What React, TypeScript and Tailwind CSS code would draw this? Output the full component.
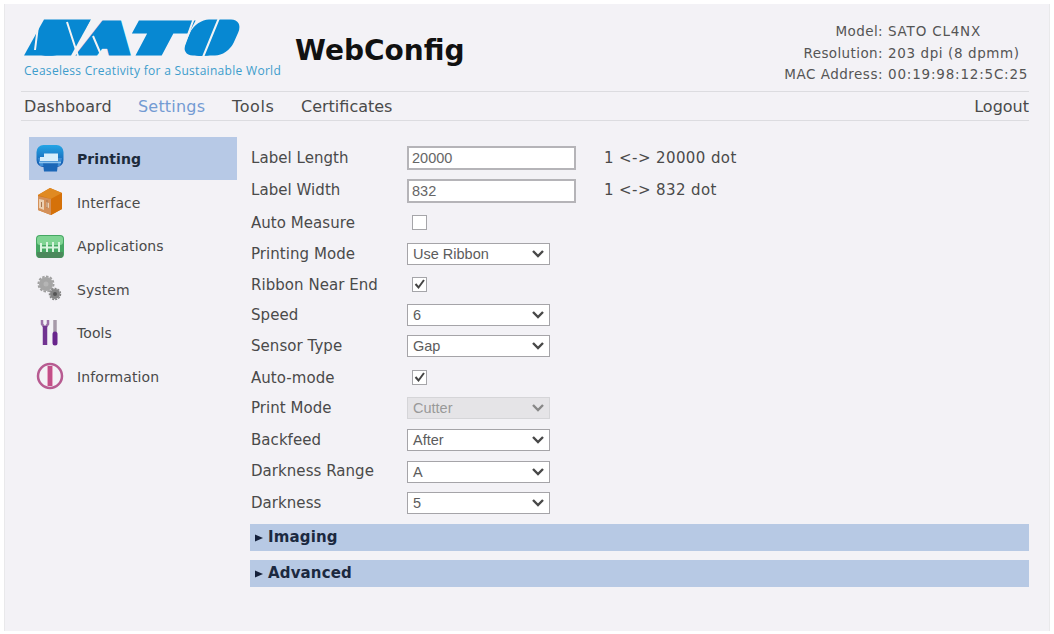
import type { ReactNode } from "react";
import clsx from "clsx";

type Row = {
  label: string;
  height: string;
  kind: "input" | "checkbox" | "select";
  value?: string;
  checked?: boolean;
  disabled?: boolean;
  hint?: string;
};

const rows: Row[] = [
  { label: "Label Length", height: "h-[32px]", kind: "input", value: "20000", hint: "1 <-> 20000 dot" },
  { label: "Label Width", height: "h-[33px]", kind: "input", value: "832", hint: "1 <-> 832 dot" },
  { label: "Auto Measure", height: "h-[33px]", kind: "checkbox" },
  { label: "Printing Mode", height: "h-[28px]", kind: "select", value: "Use Ribbon" },
  { label: "Ribbon Near End", height: "h-[34px]", kind: "checkbox", checked: true },
  { label: "Speed", height: "h-[26px]", kind: "select", value: "6" },
  { label: "Sensor Type", height: "h-[36px]", kind: "select", value: "Gap" },
  { label: "Auto-mode", height: "h-[28px]", kind: "checkbox", checked: true },
  { label: "Print Mode", height: "h-[32px]", kind: "select", value: "Cutter", disabled: true },
  { label: "Backfeed", height: "h-[32px]", kind: "select", value: "After" },
  { label: "Darkness Range", height: "h-[31px]", kind: "select", value: "A" },
  { label: "Darkness", height: "h-[32px]", kind: "select", value: "5" },
];

function Logo() {
  return (
    <svg
      width="220"
      height="40"
      viewBox="22 17 220 40"
      className="block overflow-visible"
      fontFamily="Liberation Sans"
      fontWeight="bold"
      fontSize="38"
      fill="#0788d2"
      stroke="#0788d2"
      strokeWidth="9"
      strokeLinejoin="miter"
      strokeMiterlimit="3"
    >
      {/* slanted bars behind the first and last letter */}
      <rect width="47" height="36" transform="translate(44 19.500) skewX(-29)" stroke="none" />
      <rect width="48" height="36" rx="13" transform="translate(196 19.500) skewX(-24)" stroke="none" />
      <text transform="translate(37 50.500) skewX(-29)" textLength="28" lengthAdjust="spacingAndGlyphs">S</text>
      <text transform="translate(84 50.500) skewX(-14)" textLength="40" lengthAdjust="spacingAndGlyphs">A</text>
      <text transform="translate(130 50.500) skewX(-28)" textLength="42" lengthAdjust="spacingAndGlyphs">T</text>
      <text transform="translate(186 50.500) skewX(-24)" textLength="36" lengthAdjust="spacingAndGlyphs">O</text>
      {/* slashes that cut through the letters */}
      <path
        d="M38 26L35 50M67 22L78 56M93 36L102 57M93 18L73 58M219 18L203 57M194 18L180 57"
        stroke="#f3f3f4"
        strokeWidth="2"
      />
    </svg>
  );
}

function PrinterIcon() {
  return (
    <svg width="30" height="30" viewBox="0 0 30 30">
      <defs>
        <linearGradient id="printer" x1="0" y1="0" x2="0" y2="1">
          <stop offset="0" stopColor="#25a5e5" />
          <stop offset="1" stopColor="#1456ad" />
        </linearGradient>
      </defs>
      <rect x="1.500" y="1" width="27" height="22" rx="7" fill="url(#printer)" />
      <path d="M3 14h24l-2 8H5z" fill="#3f8dd4" />
      <path d="M9 9.500h14v7.500H5v-4h4z" fill="#d7eefb" />
      <path d="M8 19h15l-1 8.500H9z" fill="#1b67b7" />
      <path d="M4 18.500h22" stroke="#8fc4ee" strokeWidth="1.500" />
    </svg>
  );
}

function BoxIcon() {
  return (
    <svg width="30" height="30" viewBox="0 0 30 30">
      <path d="M15 1l12 5v16l-11 6L3 23V8z" fill="#d57715" />
      <path d="M15 1l12 5-11 6L3 8z" fill="#e08a22" />
      <path d="M3 9l13 3v16L3 23z" fill="#d49059" />
      <path d="M16 12l11-6v16l-11 6z" fill="#d57109" />
      <path d="M4 12l5 1v10l-5-2zM11 15l3 1v5l-3-1z" fill="#ecd0b2" />
      <path d="M6.500 15v5M12 13v8" stroke="#a87650" />
    </svg>
  );
}

function AppsIcon() {
  return (
    <svg width="30" height="30" viewBox="0 0 30 30">
      <rect x="1" y="4" width="28" height="23" rx="4" fill="#45a763" />
      <rect x="2" y="5" width="26" height="9" rx="3" fill="#7fd493" />
      <path d="M2 21h26v3a3 3 0 0 1-3 3H5a3 3 0 0 1-3-3z" fill="#4b895c" />
      <path d="M6 12v9M12 11v10M18 11v10M24 11v10" stroke="#d8f4df" strokeWidth="2" />
      <path d="M5 16.500h20" stroke="#d8f4df" strokeWidth="2" />
    </svg>
  );
}

function GearsIcon() {
  return (
    <svg width="30" height="30" viewBox="0 0 30 30" fill="none">
      <circle cx="11" cy="10" r="7.500" stroke="#a0a0a0" strokeWidth="2" strokeDasharray="2.500 1.400" />
      <circle cx="11" cy="10" r="7" fill="#a5a5a5" />
      <circle cx="11" cy="10" r="2.500" fill="#b5b5b5" />
      <circle cx="20" cy="20" r="5.500" stroke="#858585" strokeWidth="1.500" strokeDasharray="2 1.100" />
      <circle cx="20" cy="20" r="5" fill="#858585" />
      <circle cx="20" cy="20" r="2" fill="#555" />
    </svg>
  );
}

function ToolsIcon() {
  return (
    <svg width="30" height="30" viewBox="0 0 30 30" fill="none">
      <path d="M7 2v4l3 4 3-4V2" stroke="#9c72a8" strokeWidth="2.500" />
      <path d="M10 8v19" stroke="#713491" strokeWidth="4.500" />
      <path d="M20 2v12" stroke="#a69aa9" strokeWidth="3.500" />
      <path d="M20 16v9" stroke="#68258c" strokeWidth="5" strokeLinecap="round" />
    </svg>
  );
}

function InfoIcon() {
  return (
    <svg width="30" height="30" viewBox="0 0 30 30" fill="none">
      <circle cx="15" cy="15" r="12" stroke="#b75b91" strokeWidth="2.500" />
      <path d="M15 5v20" stroke="#c24f88" strokeWidth="4" />
      <path d="M12.500 5v20M17.500 5v20" stroke="#e7a5c3" />
    </svg>
  );
}

const menu: { label: string; icon: ReactNode }[] = [
  { label: "Printing", icon: <PrinterIcon /> },
  { label: "Interface", icon: <BoxIcon /> },
  { label: "Applications", icon: <AppsIcon /> },
  { label: "System", icon: <GearsIcon /> },
  { label: "Tools", icon: <ToolsIcon /> },
  { label: "Information", icon: <InfoIcon /> },
];

function Control({ row }: { row: Row }) {
  if (row.kind === "checkbox") {
    return (
      <span className="mb-[2px] ml-[5px] flex size-[15px] items-center justify-center border border-[#a5a5a9] bg-white">
        {row.checked && (
          <svg width="13" height="13" viewBox="0 0 13 13" fill="none" stroke="#444" strokeWidth="2">
            <path d="M2.500 6l3 3.500L11 2" />
          </svg>
        )}
      </span>
    );
  }
  if (row.kind === "input") {
    return (
      <span className="flex h-[24px] w-[169px] items-center border-2 border-[#b5b4b8] bg-white pt-[2px] pl-[3px] font-['Liberation_Sans',sans-serif] text-[14.5px] text-[#666]">
        {row.value}
      </span>
    );
  }
  return (
    <span
      className={clsx(
        "flex h-[22px] w-[143px] items-center justify-between border pr-[4px] pl-[5px] font-['Liberation_Sans',sans-serif] text-[14.5px]",
        row.disabled ? "border-[#d5d5d8] bg-[#e5e4e7] text-[#999]" : "border-[#a5a4a8] bg-white text-[#5c5c5c]"
      )}
    >
      <span className="pt-[2px]">{row.value}</span>
      <svg width="14" height="10" viewBox="0 0 14 10" fill="none" stroke={row.disabled ? "#888" : "#484848"} strokeWidth="2.4">
        <path d="M2 2l5 5 5-5" />
      </svg>
    </span>
  );
}

function Section({ title }: { title: string }) {
  return (
    <div className="flex h-[27px] items-center gap-[5px] bg-[#b7c9e4] pl-[5px] text-[15px] font-bold tracking-[0.15px] text-[#1c2940]">
      <svg width="8" height="8" viewBox="0 0 8 8" fill="#14203a">
        <path d="M0 0.500L8 4L0 7.500z" />
      </svg>
      {title}
    </div>
  );
}

export default function App() {
  return (
    <div className="h-[634px] w-[1054px] bg-white pt-[4px] pl-[4px] font-['DejaVu_Sans',sans-serif] text-[#4a4a4a]">
      <div className="h-[627px] w-[1046px] border-x border-[#e9e9eb] bg-[#f3f2f6] pr-[20px] pl-[16px]">
        {/* Header */}
        <header className="flex h-[88px] justify-between border-b border-[#dcdce0]">
          <div className="flex">
            <div className="w-[271px] pt-[13px] pl-px">
              <Logo />
              <div className="mt-[5px] pl-[2px] font-['Open_Sans',sans-serif] text-[12px] leading-[18px] tracking-[0.3px] whitespace-nowrap text-[#3d9dcc]">
                Ceaseless Creativity for a Sustainable World
              </div>
            </div>
            <h1 className="pt-[27px] pl-[3px] text-[28px] leading-[40px] font-bold text-[#111]">WebConfig</h1>
          </div>
          <div className="grid w-[245px] grid-cols-[99px_1fr] content-start gap-x-[5px] pt-[17px] text-[13.5px] leading-[21.500px] whitespace-nowrap text-[#555]">
            <span className="text-right tracking-[0.4px]">Model:</span>
            <span className="tracking-[0.8px]">SATO CL4NX</span>
            <span className="text-right tracking-[0.4px]">Resolution:</span>
            <span className="tracking-[0.6px]">203 dpi (8 dpmm)</span>
            <span className="text-right tracking-[0.5px]">MAC Address:</span>
            <span className="tracking-[0.8px]">00:19:98:12:5C:25</span>
          </div>
        </header>

        {/* Top navigation */}
        <nav className="flex h-[29px] items-center border-b border-[#dcdce0] pt-[2px] pl-[3px] text-[16px]">
          <span className="w-[114px] tracking-[0.1px]">Dashboard</span>
          <span className="w-[94px] tracking-[0.2px] text-[#739bd3]">Settings</span>
          <span className="w-[69px] tracking-[0.6px]">Tools</span>
          <span>Certificates</span>
          <span className="ml-auto">Logout</span>
        </nav>

        <div className="flex">
          {/* Sidebar */}
          <aside className="ml-[8px] w-[208px] pt-[16px]">
            {menu.map((item, i) => (
              <div
                key={item.label}
                className={clsx(
                  "mb-[0.500px] flex h-[43px] items-center gap-[12px] pl-[6px] text-[14px] tracking-[0.1px]",
                  i === 0 && "bg-[#b7c9e6] font-bold text-[#1d2b3c]"
                )}
              >
                {item.icon}
                <span className="pt-[2px]">{item.label}</span>
              </div>
            ))}
          </aside>

          {/* Settings form */}
          <main className="ml-[13px] flex-1 pt-[21px]">
            {rows.map((row) => (
              <div key={row.label} className={clsx("flex items-center text-[15px]", row.height)}>
                <span className="w-[157px] pl-px tracking-[0.05px]">{row.label}</span>
                <Control row={row} />
                {row.hint && <span className="ml-[28px] tracking-[0.4px]">{row.hint}</span>}
              </div>
            ))}
            <div className="mt-[5px] flex flex-col gap-[9px]">
              <Section title="Imaging" />
              <Section title="Advanced" />
            </div>
          </main>
        </div>
      </div>
    </div>
  );
}
